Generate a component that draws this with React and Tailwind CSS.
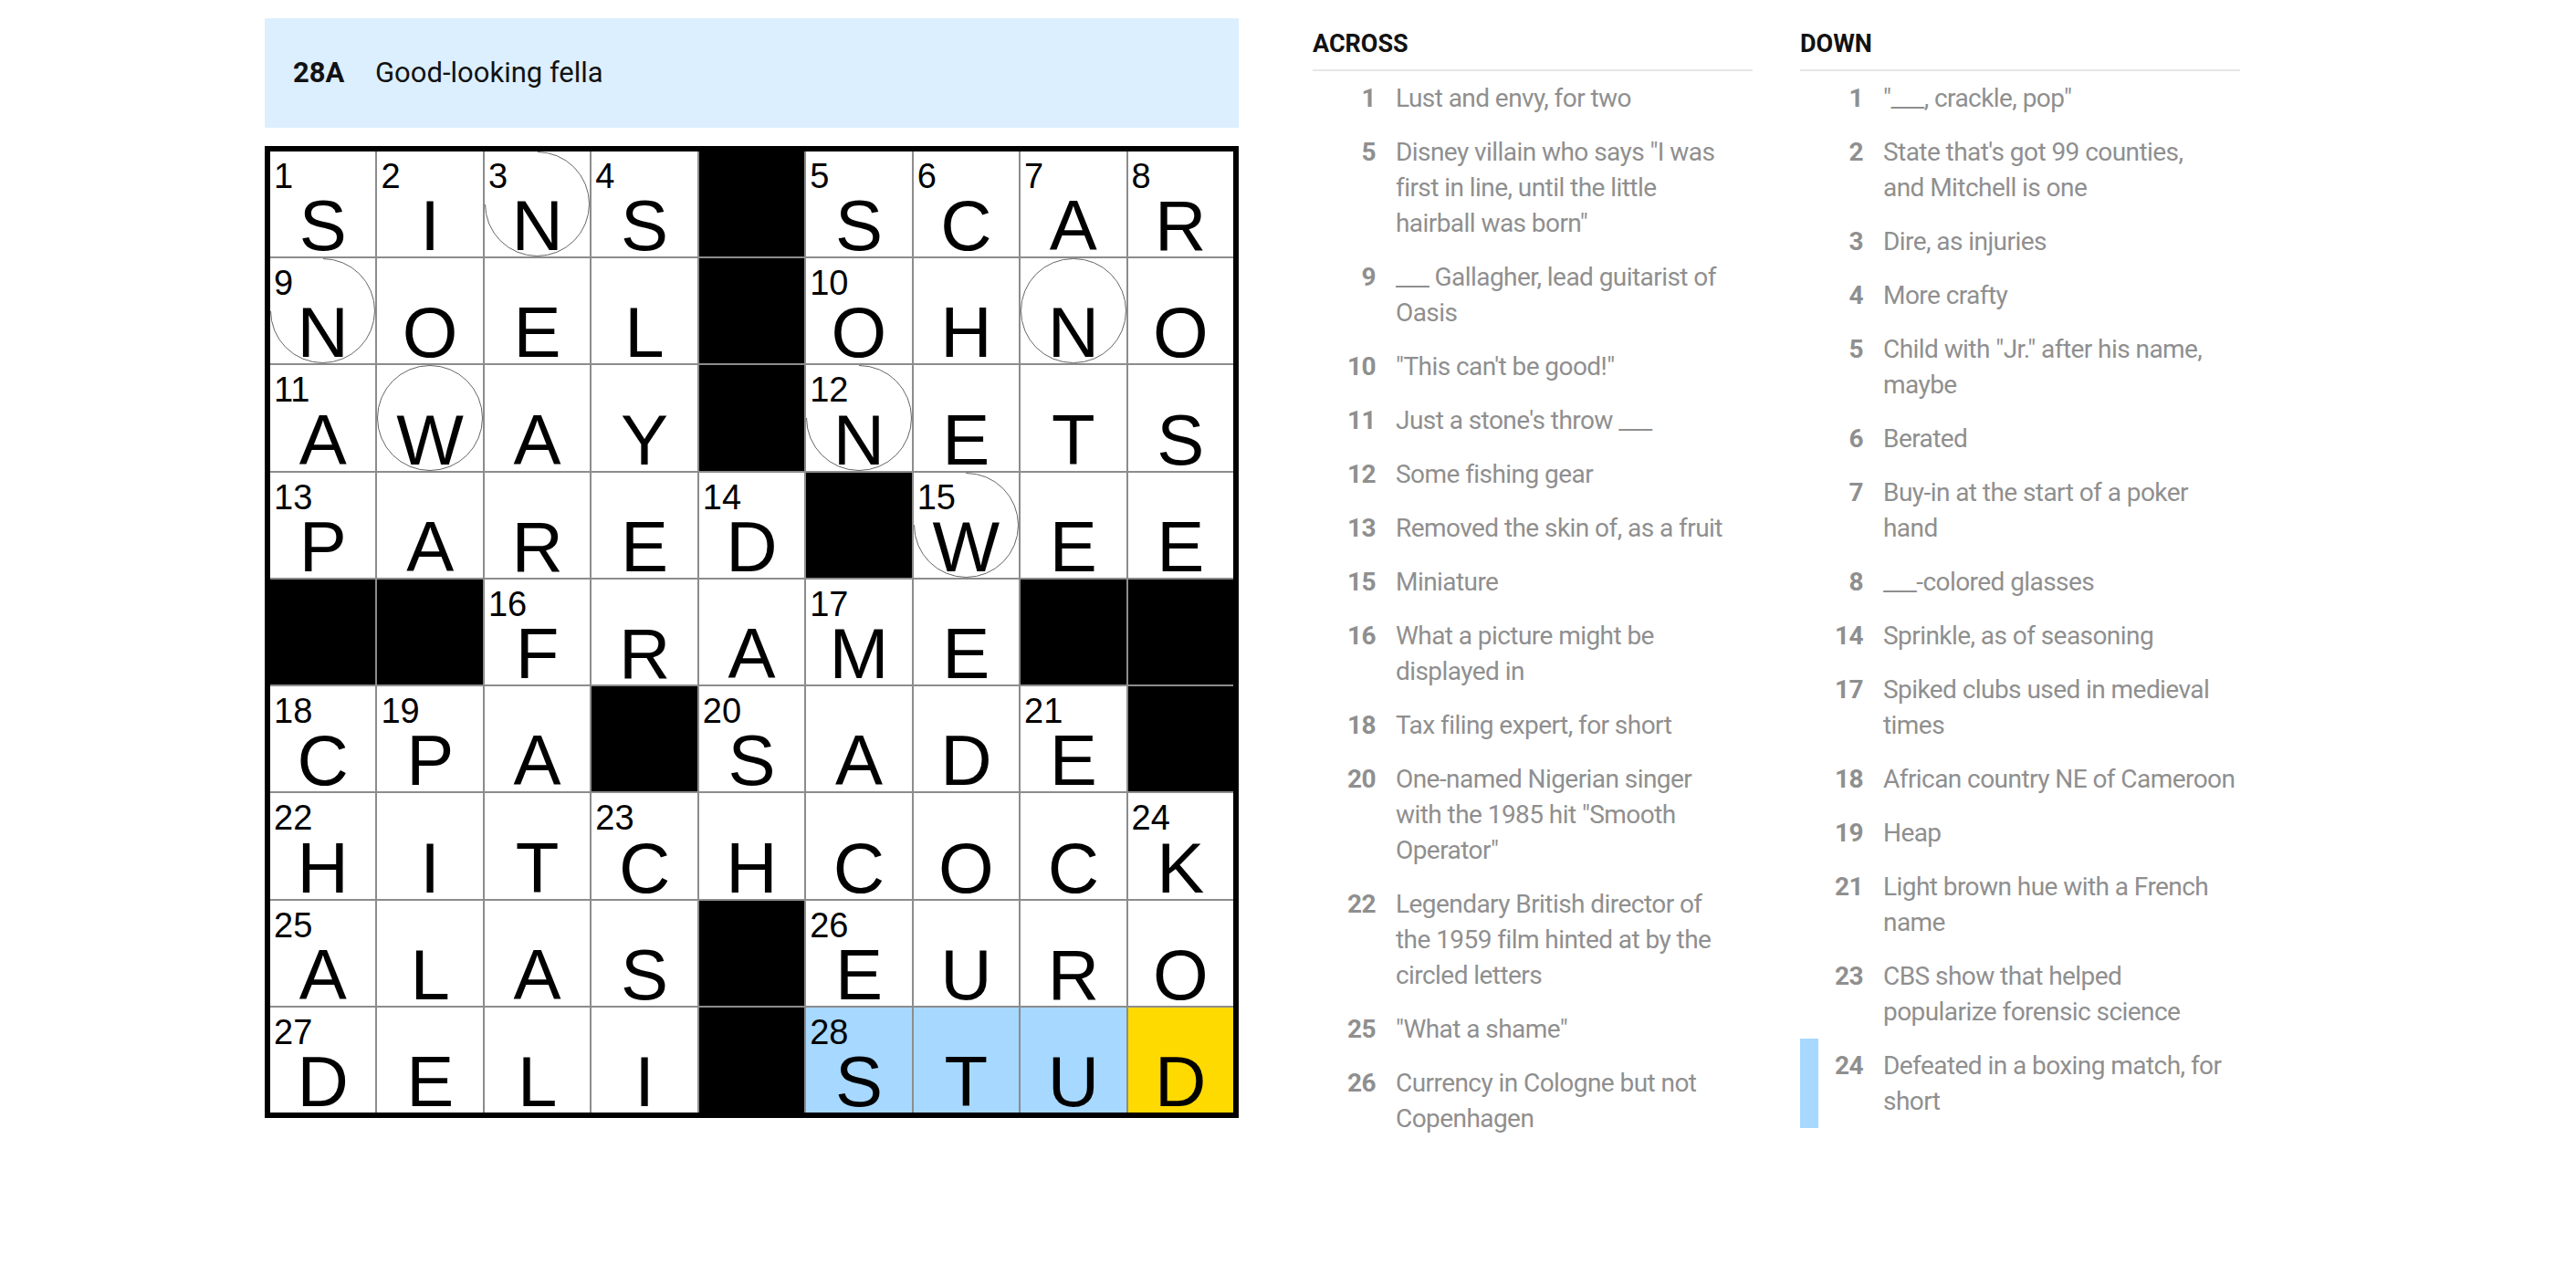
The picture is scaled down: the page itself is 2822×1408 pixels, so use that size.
import React from 'react';

const ROWS = [
  'SINS#SCAR',
  'NOEL#OHNO',
  'AWAY#NETS',
  'PARED#WEE',
  '##FRAME##',
  'CPA#SADE#',
  'HITCHCOCK',
  'ALAS#EURO',
  'DELI#STUD',
];

const CIRCLED = new Set(['0-2', '1-0', '1-7', '2-1', '2-5', '3-6']);
const WORD = new Set(['8-5', '8-6', '8-7']);
const CURSOR = '8-8';

// line breaks are kept as the clue panel lays them out
const ACROSS = [
  [1, 'Lust and envy, for two'],
  [5, 'Disney villain who says "I was\nfirst in line, until the little\nhairball was born"'],
  [9, '___ Gallagher, lead guitarist of\nOasis'],
  [10, '"This can\'t be good!"'],
  [11, "Just a stone's throw ___"],
  [12, 'Some fishing gear'],
  [13, 'Removed the skin of, as a fruit'],
  [15, 'Miniature'],
  [16, 'What a picture might be\ndisplayed in'],
  [18, 'Tax filing expert, for short'],
  [20, 'One-named Nigerian singer\nwith the 1985 hit "Smooth\nOperator"'],
  [22, 'Legendary British director of\nthe 1959 film hinted at by the\ncircled letters'],
  [25, '"What a shame"'],
  [26, 'Currency in Cologne but not\nCopenhagen'],
];

const DOWN = [
  [1, '"___, crackle, pop"'],
  [2, "State that's got 99 counties,\nand Mitchell is one"],
  [3, 'Dire, as injuries'],
  [4, 'More crafty'],
  [5, 'Child with "Jr." after his name,\nmaybe'],
  [6, 'Berated'],
  [7, 'Buy-in at the start of a poker\nhand'],
  [8, '___-colored glasses'],
  [14, 'Sprinkle, as of seasoning'],
  [17, 'Spiked clubs used in medieval\ntimes'],
  [18, 'African country NE of Cameroon'],
  [19, 'Heap'],
  [21, 'Light brown hue with a French\nname'],
  [23, 'CBS show that helped\npopularize forensic science'],
  [24, 'Defeated in a boxing match, for\nshort'],
];

const isBlock = (r, c) => r < 0 || c < 0 || r > 8 || c > 8 || ROWS[r][c] === '#';

// standard numbering: a cell starts a word if the square before it is a block
function buildNumbers() {
  const nums = {};
  let n = 1;
  for (let r = 0; r < 9; r++) {
    for (let c = 0; c < 9; c++) {
      if (isBlock(r, c)) continue;
      const across = isBlock(r, c - 1) && !isBlock(r, c + 1);
      const down = isBlock(r - 1, c) && !isBlock(r + 1, c);
      if (across || down) nums[`${r}-${c}`] = n++;
    }
  }
  return nums;
}

const NUMBERS = buildNumbers();

function Cell({ r, c }) {
  const key = `${r}-${c}`;
  if (isBlock(r, c)) return <div className="bg-black" />;

  let bg = 'bg-white';
  if (WORD.has(key)) bg = 'bg-[#a7d8ff]';
  if (key === CURSOR) bg = 'bg-[#ffda00]';
  const circled = CIRCLED.has(key);
  const num = NUMBERS[key];

  return (
    <div className={`relative overflow-hidden ${bg}`}>
      {circled && <div className="absolute inset-0 rounded-full border-[1.5px] border-[#666]" />}
      {/* the label box hides the top-left quarter of a circle */}
      {num && (
        <span className={`absolute left-0 top-0 w-1/2 h-1/2 pl-[4px] pt-[8px] text-[38px] leading-none text-black ${circled ? 'bg-white' : ''}`}>
          {num}
        </span>
      )}
      <span className="absolute inset-x-0 bottom-0 text-center text-[78px] leading-[68px] text-black">
        {ROWS[r][c]}
      </span>
    </div>
  );
}

function ClueList({ title, clues, active }) {
  return (
    <section className="w-[482px]">
      <h3 className="text-[27px] leading-[30px] font-bold text-[#121212] pb-[13px] border-b-2 border-[#e6e6e6]">
        {title}
      </h3>
      <ol>
        {clues.map(([n, text]) => (
          <li
            key={n}
            className={`flex py-[10px] pr-[4px] border-l-[20px] text-[28px] leading-[39px] tracking-[-0.02em] text-[#8f8f8f] ${n === active ? 'border-[#a7d8ff]' : 'border-transparent'}`}
          >
            <span className="w-[49px] shrink-0 text-right font-bold mr-[22px]">{n}</span>
            <span className="flex-1 whitespace-pre-line">{text}</span>
          </li>
        ))}
      </ol>
    </section>
  );
}

export default function App() {
  return (
    <div className="min-h-screen bg-white flex pl-[290px] font-[Roboto,sans-serif]">
      <div className="pt-[20px] w-[1067px] shrink-0">
        <div className="h-[120px] bg-[#dcefff] flex items-center pl-[31px] text-[31px] text-[#121212]">
          <span className="w-[90px] font-bold">28A</span>
          <span>Good-looking fella</span>
        </div>
        <div className="mt-[20px] border-[6px] border-black w-[1067px] h-[1065px] bg-[#8c8c8c] grid grid-cols-9 grid-rows-9 gap-[2px] font-['Liberation_Sans',Arial,sans-serif]">
          {ROWS.map((row, r) => row.split('').map((_, c) => <Cell key={`${r}-${c}`} r={r} c={c} />))}
        </div>
      </div>
      <div className="ml-[81px] pt-[33px] flex gap-[52px]">
        <ClueList title="ACROSS" clues={ACROSS} />
        <ClueList title="DOWN" clues={DOWN} active={24} />
      </div>
    </div>
  );
}
